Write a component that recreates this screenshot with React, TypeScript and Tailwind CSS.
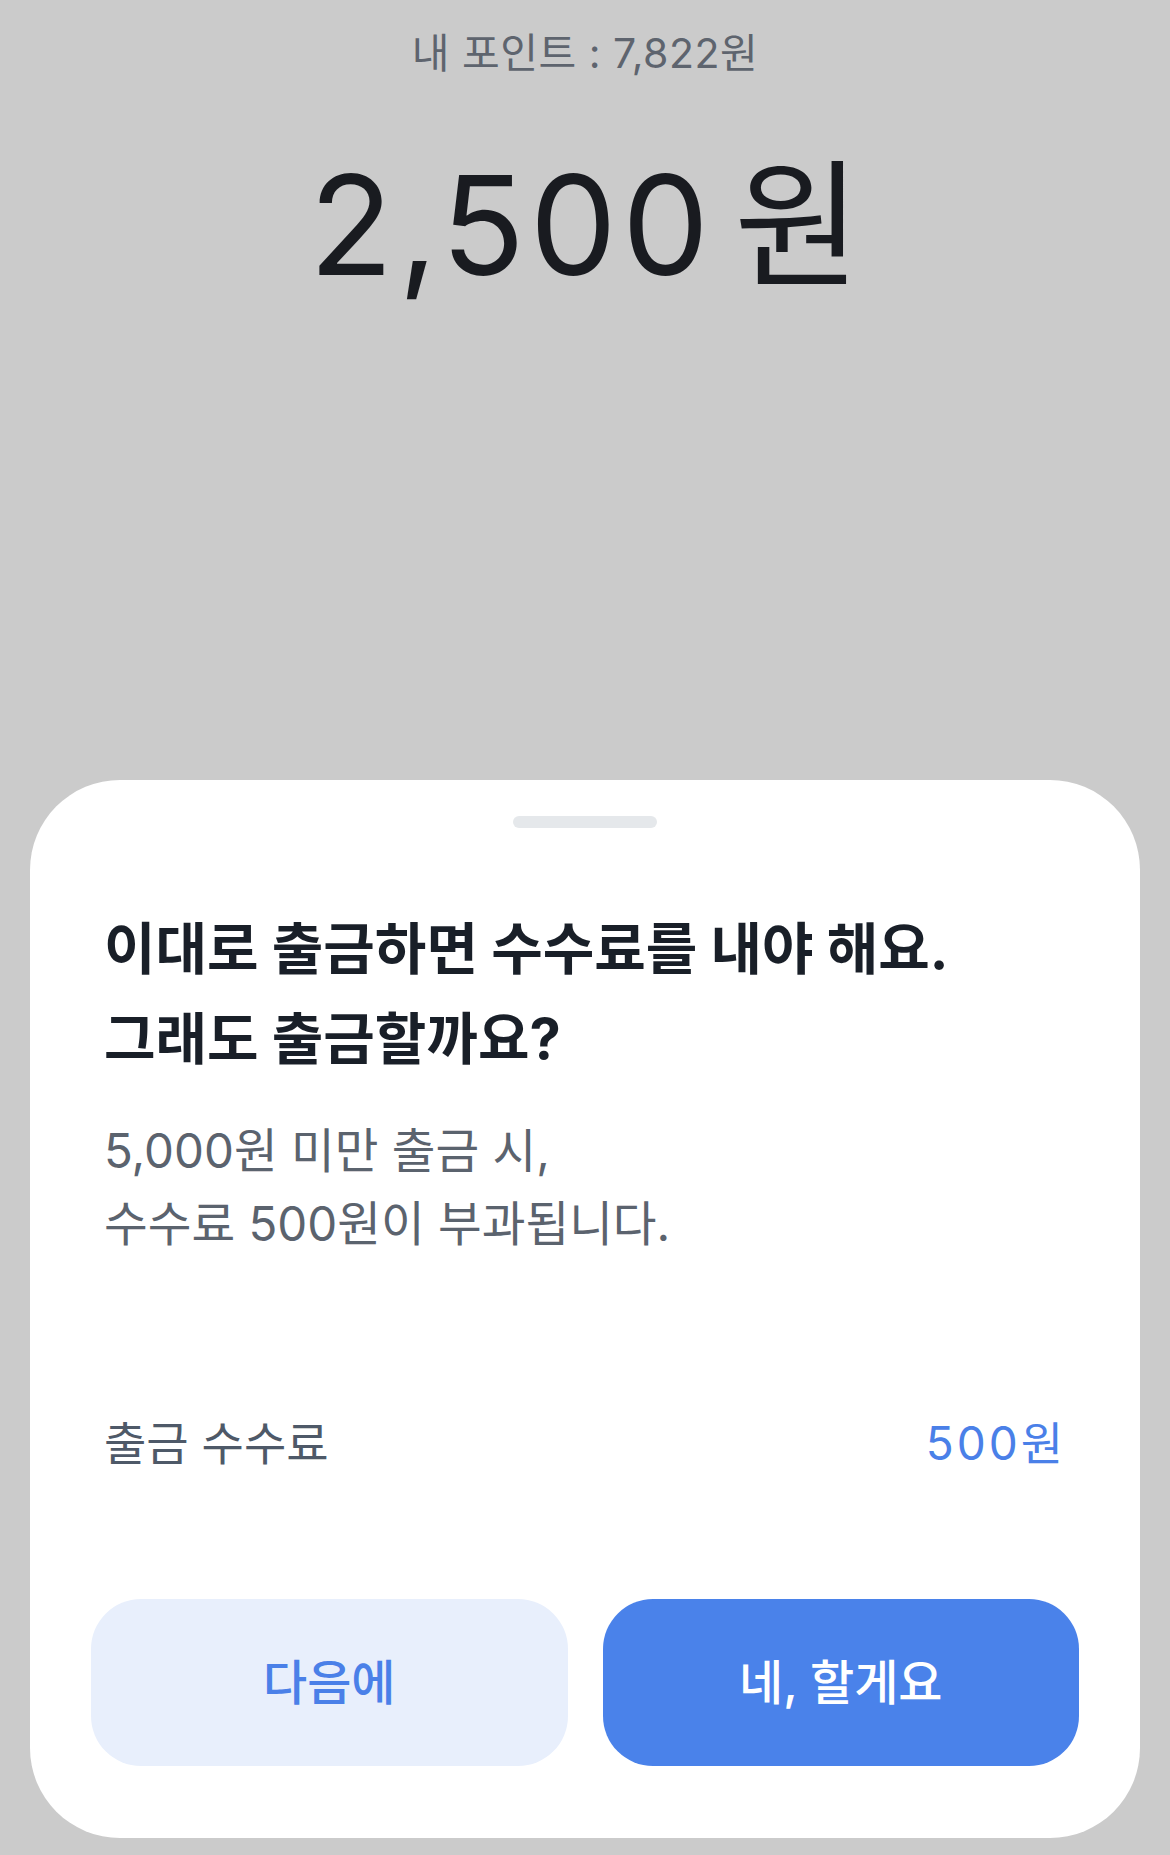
import React from 'react';

const font = { fontFamily: 'Inter, "Noto Sans CJK KR", "Noto Sans", sans-serif' };

export default function App() {
  return (
    <div className="flex h-[1855px] w-full flex-col bg-[#cbcbcb]" style={font}>
      {/* amount area */}
      <div className="flex flex-col items-center pt-[30px]">
        <p className="text-[41px] leading-[46px] tracking-[0.5px] text-[#5e646e]">내 포인트 : 7,822원</p>
        <p className="mt-[80px] flex items-baseline gap-[20px] text-[138px] leading-[138px] text-[#191b20]">
          <span className="tracking-[5px]">2,500</span>
          <span>원</span>
        </p>
      </div>

      {/* bottom sheet */}
      <div className="mx-[30px] mb-[17px] mt-auto flex h-[1058px] flex-col rounded-[90px] bg-white">
        <div className="mx-auto mt-[36px] h-[12px] w-[144px] rounded-full bg-[#e5e8eb]" />

        <div className="px-[74px]">
          <h1 className="mt-[76px] text-[56px] font-bold leading-[90px] text-[#191f28]">
            이대로 출금하면 수수료를 내야 해요.
            <br />
            그래도 출금할까요?
          </h1>
          <p className="mt-[30px] text-[47.5px] leading-[73px] text-[#5b636e]">
            5,000원 미만 출금 시,
            <br />
            수수료 500원이 부과됩니다.
          </p>

          <div className="mt-[153px] flex items-center justify-between text-[46px] leading-[60px]">
            <span className="text-[#4e5968]">출금 수수료</span>
            <span className="tracking-[3px] text-[#4a80e8]">500원</span>
          </div>
        </div>

        <div className="mt-auto mb-[72px] flex gap-[35px] px-[61px]">
          <button className="flex h-[167px] flex-1 items-center justify-center rounded-[50px] bg-[#e8effc] text-[48px] font-medium text-[#4a80e8]">
            다음에
          </button>
          <button className="flex h-[167px] flex-1 items-center justify-center rounded-[50px] bg-[#4a82ea] text-[48px] font-medium text-white">
            네, 할게요
          </button>
        </div>
      </div>
    </div>
  );
}
